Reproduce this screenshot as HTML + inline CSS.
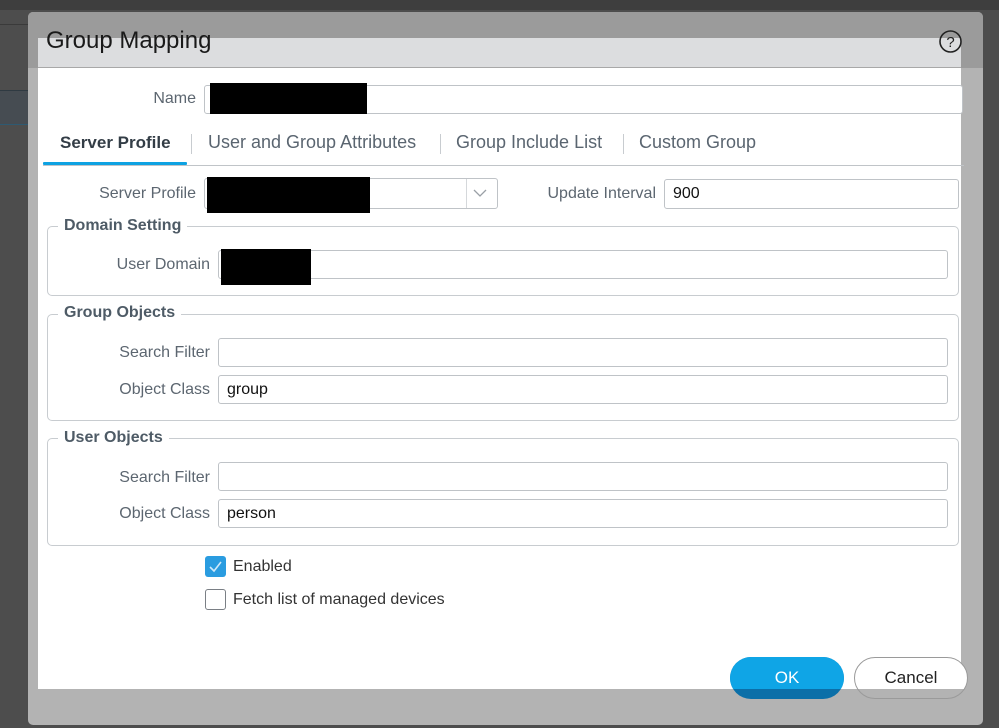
<!DOCTYPE html>
<html><head><meta charset="utf-8">
<style>
*{box-sizing:border-box;margin:0;padding:0}
body{width:999px;height:728px;overflow:hidden;background:#4d4d4d;font-family:"Liberation Sans",sans-serif;position:relative}
.a{position:absolute}
.lbl{position:absolute;font-size:16px;color:#5c6670;text-align:right;white-space:nowrap}
.inp{position:absolute;border:1px solid #bfc3c7;border-radius:3px;background:#fff;font-size:16px;color:#111;padding-left:8px;line-height:28px}
.fs{position:absolute;border:1px solid #c8ccd0;border-radius:5px}
.lg{position:absolute;background:#fff;font-size:16px;font-weight:bold;color:#4e5b66;padding:0 6px;line-height:18px}
.tab{position:absolute;top:132px;font-size:18px;color:#5a6570;white-space:nowrap}
.sep{position:absolute;top:134px;width:1px;height:20px;background:#c8ccd0}
</style></head><body>
<div class="a" style="left:0;top:0;width:999px;height:10px;background:#3e3e3e"></div>
<div class="a" style="left:0;top:24px;width:28px;height:1px;background:#3a3a3a"></div>
<div class="a" style="left:0;top:90px;width:28px;height:35px;background:#464c52;border-top:1px solid #2f3a42;border-bottom:1px solid #2e5a72"></div>
<div class="a" style="left:28px;top:12px;width:955px;height:713px;background:#b3b3b3;border-radius:5px;overflow:hidden">
  <div class="a" style="left:0;top:0;width:955px;height:56px;background:#9b9b9b"></div>
</div>
<div class="a" style="left:38px;top:38px;width:923px;height:651px;background:#fff"></div>
<div class="a" style="left:38px;top:38px;width:923px;height:30px;background:#dcdddf;border-bottom:1px solid #a8a8a8"></div>
<div class="a" style="left:46px;top:27px;font-size:24px;color:#1a1a1a">Group Mapping</div>
<svg class="a" style="left:938px;top:29px" width="25" height="25" viewBox="0 0 25 25"><circle cx="12.5" cy="12.5" r="10.5" fill="none" stroke="#222" stroke-width="1.6"/><text x="12.5" y="18" text-anchor="middle" font-family="Liberation Sans" font-size="15" fill="#222">?</text></svg>

<div class="lbl" style="right:803px;top:90px">Name</div>
<div class="inp" style="left:204px;top:85px;width:759px;height:29px"></div>
<div class="a" style="left:210px;top:83px;width:157px;height:31px;background:#000"></div>

<div class="tab" style="left:60px;font-weight:bold;color:#333d46;font-size:17px;top:133px">Server Profile</div>
<div class="sep" style="left:191px"></div>
<div class="tab" style="left:208px">User and Group Attributes</div>
<div class="sep" style="left:440px"></div>
<div class="tab" style="left:456px">Group Include List</div>
<div class="sep" style="left:623px"></div>
<div class="tab" style="left:639px">Custom Group</div>
<div class="a" style="left:43px;top:165px;width:921px;height:1px;background:#c0c4c8"></div>
<div class="a" style="left:43px;top:162px;width:144px;height:3px;background:#0da2e2;border-radius:1px"></div>

<div class="lbl" style="right:803px;top:185px">Server Profile</div>
<div class="inp" style="left:204px;top:178px;width:294px;height:31px"></div>
<div class="a" style="left:466px;top:179px;width:1px;height:29px;background:#d5d8db"></div>
<svg class="a" style="left:472px;top:187px" width="16" height="12" viewBox="0 0 16 12"><path d="M2 3 L8 9 L14 3" fill="none" stroke="#9aa0a6" stroke-width="1.3"/></svg>
<div class="a" style="left:207px;top:177px;width:163px;height:36px;background:#000"></div>
<div class="lbl" style="right:343px;top:185px">Update Interval</div>
<div class="inp" style="left:664px;top:179px;width:295px;height:30px">900</div>

<div class="fs" style="left:47px;top:226px;width:912px;height:70px"></div>
<div class="lg" style="left:58px;top:217px">Domain Setting</div>
<div class="lbl" style="right:789px;top:256px">User Domain</div>
<div class="inp" style="left:218px;top:250px;width:730px;height:29px"></div>
<div class="a" style="left:221px;top:249px;width:90px;height:36px;background:#000"></div>

<div class="fs" style="left:47px;top:314px;width:912px;height:107px"></div>
<div class="lg" style="left:58px;top:304px">Group Objects</div>
<div class="lbl" style="right:789px;top:344px">Search Filter</div>
<div class="inp" style="left:218px;top:338px;width:730px;height:29px"></div>
<div class="lbl" style="right:789px;top:381px">Object Class</div>
<div class="inp" style="left:218px;top:375px;width:730px;height:29px">group</div>

<div class="fs" style="left:47px;top:438px;width:912px;height:108px"></div>
<div class="lg" style="left:58px;top:429px">User Objects</div>
<div class="lbl" style="right:789px;top:469px">Search Filter</div>
<div class="inp" style="left:218px;top:462px;width:730px;height:29px"></div>
<div class="lbl" style="right:789px;top:505px">Object Class</div>
<div class="inp" style="left:218px;top:499px;width:730px;height:29px">person</div>

<div class="a" style="left:205px;top:556px;width:21px;height:21px;background:#2a9ce0;border-radius:3px"></div>
<svg class="a" style="left:205px;top:556px" width="21" height="21" viewBox="0 0 21 21"><path d="M5 11 L9 15 L16 6" fill="none" stroke="#cfe9fa" stroke-width="1.6"/></svg>
<div class="a" style="left:233px;top:558px;font-size:16px;color:#333">Enabled</div>
<div class="a" style="left:205px;top:589px;width:21px;height:21px;border:1.5px solid #7a7f85;border-radius:3px;background:#fff"></div>
<div class="a" style="left:233px;top:591px;font-size:16px;color:#333">Fetch list of managed devices</div>

<div class="a" style="left:730px;top:657px;width:114px;height:42px;border-radius:21px;background:#0b6fa8;overflow:hidden">
  <div class="a" style="left:0;top:0;width:114px;height:32px;background:#0fa5e6"></div>
  <div class="a" style="left:0;top:11px;width:114px;text-align:center;font-size:17px;color:#fff">OK</div>
</div>
<div class="a" style="left:854px;top:657px;width:114px;height:42px;border-radius:21px;border:1px solid #9a9a9a;background:linear-gradient(#fff 0,#fff 77%,#b3b3b3 77%)"></div>
<div class="a" style="left:854px;top:668px;width:114px;text-align:center;font-size:17px;color:#222">Cancel</div>
</body></html>
